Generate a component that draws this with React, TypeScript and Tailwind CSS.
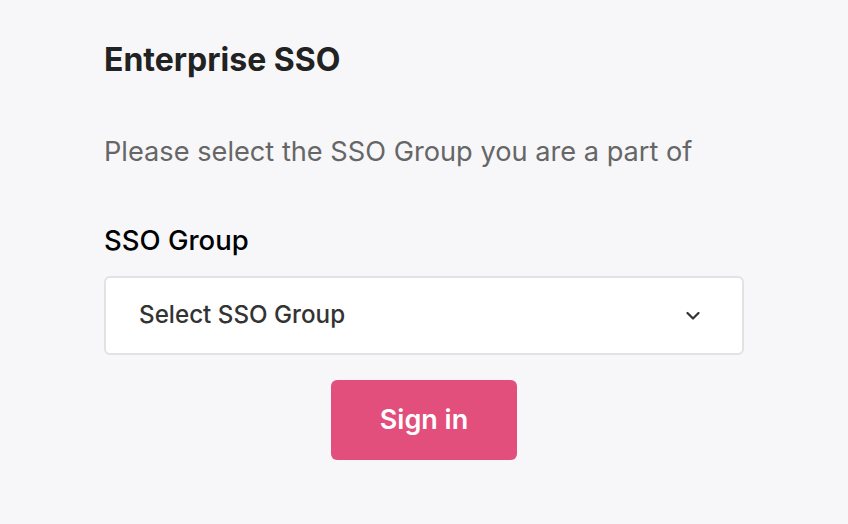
import React, { useState } from 'react';

const App = () => {
  const [group, setGroup] = useState('');

  return (
    <div
      className="min-h-screen w-full bg-[#f7f7f9]"
      style={{ fontFamily: 'Inter, "Noto Sans", sans-serif' }}
    >
      <div className="w-[640px] ml-[104px] pt-[40px] flex flex-col">
        <h1 className="text-[32px] font-bold text-[#222222] leading-[40px]">Enterprise SSO</h1>

        <p className="mt-[54px] text-[27.2px] text-[#666666] leading-[36px]">
          Please select the SSO Group you are a part of
        </p>

        <label className="mt-[52px] text-[27.5px] font-medium text-black leading-[36px]">SSO Group</label>

        <div className="relative mt-[18px] h-[79px] bg-white border-2 border-[#e2e2e4] rounded-md">
          <select
            value={group}
            onChange={(e) => setGroup(e.target.value)}
            className="appearance-none w-full h-full bg-transparent pl-[33px] pr-12 text-[24.2px] font-medium text-[#333333] outline-none"
          >
            <option value="">Select SSO Group</option>
          </select>
          <svg
            className="absolute right-[42px] top-1/2 -translate-y-1/2 pointer-events-none"
            width="14"
            height="9"
            viewBox="0 0 14 9"
            fill="none"
            stroke="#333333"
            strokeWidth="2.2"
            strokeLinecap="round"
            strokeLinejoin="round"
          >
            <path d="M1.5 1.5L7 7l5.5-5.5" />
          </svg>
        </div>

        <div className="flex justify-center mt-[25px]">
          <button className="w-[186px] h-[80px] rounded-md bg-[#e34f7d] text-white text-[27px] font-semibold">
            Sign in
          </button>
        </div>
      </div>
    </div>
  );
};

export default App;
